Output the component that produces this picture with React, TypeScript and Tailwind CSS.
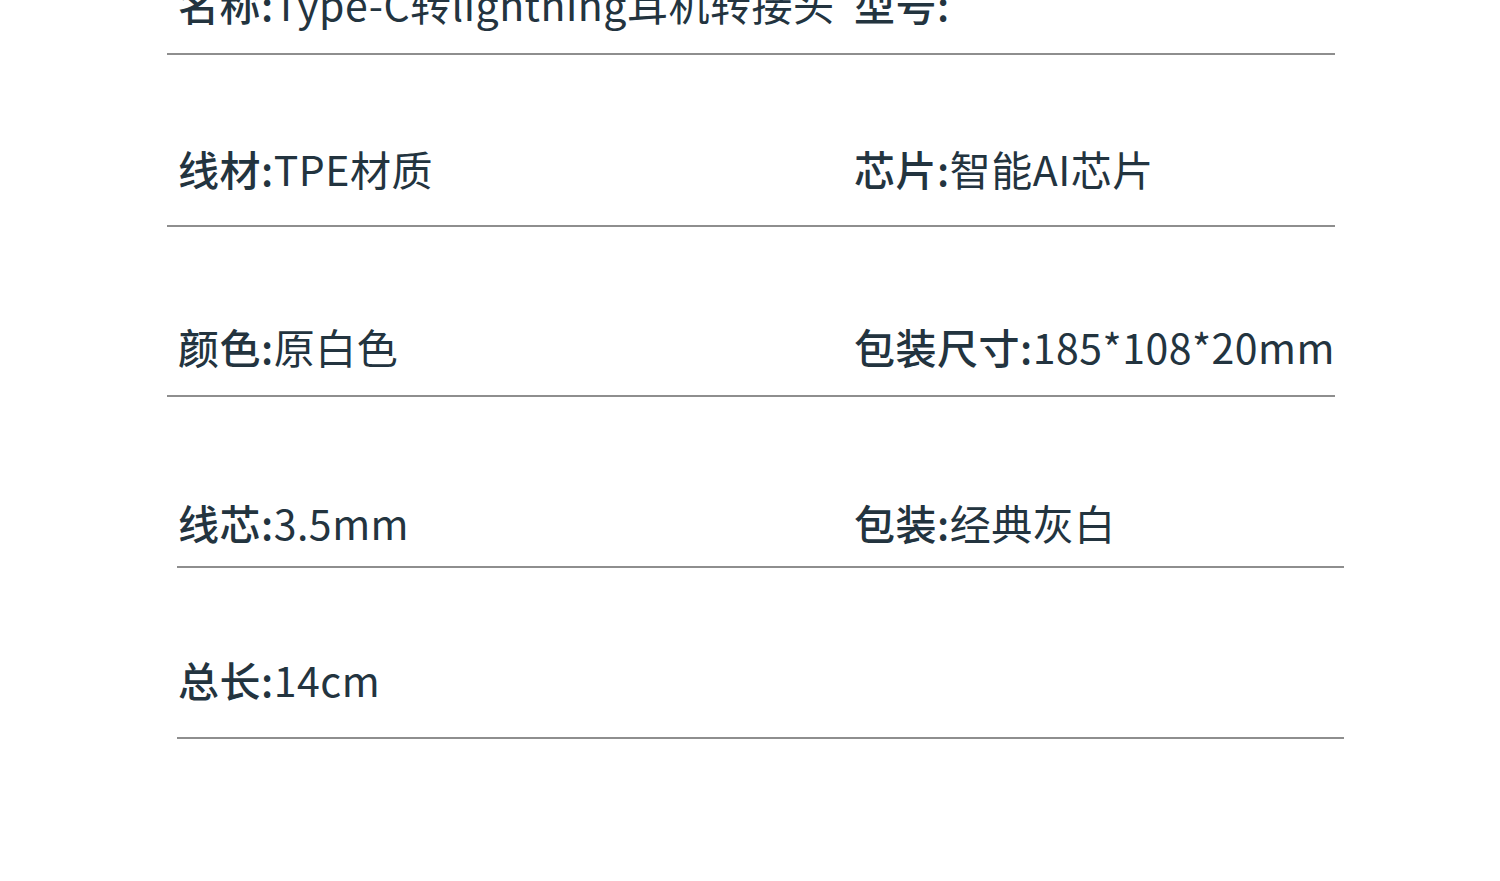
import React from "react";

type Cell = { label: string; value: string } | null;

function Item({ cell }: { cell: Cell }) {
  if (!cell) return <div />;
  return (
    <div className="whitespace-nowrap tracking-[0.5px]">
      <span className="font-medium">{cell.label}</span>
      <span className="font-normal">{cell.value}</span>
    </div>
  );
}

function Row({
  left,
  right,
  topGap,
  bottomGap,
  shift,
}: {
  left: Cell;
  right: Cell;
  topGap: string;
  bottomGap: string;
  shift?: boolean;
}) {
  return (
    <div className={topGap}>
      <div className={`grid grid-cols-[676px_1fr] pl-[178px] leading-[48px] ${bottomGap}`}>
        <Item cell={left} />
        <Item cell={right} />
      </div>
      <div
        className={
          shift
            ? "ml-[177px] w-[1167px] h-[2px] bg-[#8e8e8e]"
            : "ml-[167px] w-[1168px] h-[2px] bg-[#8e8e8e]"
        }
      />
    </div>
  );
}

export default function App() {
  return (
    <div
      className="w-[1500px] h-[881px] overflow-hidden bg-white text-[#23343f] text-[41px]"
      style={{ fontFamily: '"Noto Sans CJK SC", "Noto Sans", sans-serif' }}
    >
      <div className="-mt-[21px]">
        <Row
          left={{ label: "名称:", value: "Type-C转lightning耳机转接头" }}
          right={{ label: "型号:", value: "" }}
          topGap="pt-0"
          bottomGap="pb-[26px]"
        />
        <Row
          left={{ label: "线材:", value: "TPE材质" }}
          right={{ label: "芯片:", value: "智能AI芯片" }}
          topGap="pt-[89px]"
          bottomGap="pb-[33px]"
        />
        <Row
          left={{ label: "颜色:", value: "原白色" }}
          right={{ label: "包装尺寸:", value: "185*108*20mm" }}
          topGap="pt-[95px]"
          bottomGap="pb-[25px]"
        />
        <Row
          left={{ label: "线芯:", value: "3.5mm" }}
          right={{ label: "包装:", value: "经典灰白" }}
          topGap="pt-[101px]"
          bottomGap="pb-[20px]"
          shift
        />
        <Row
          left={{ label: "总长:", value: "14cm" }}
          right={null}
          topGap="pt-[87px]"
          bottomGap="pb-[34px]"
          shift
        />
      </div>
    </div>
  );
}
